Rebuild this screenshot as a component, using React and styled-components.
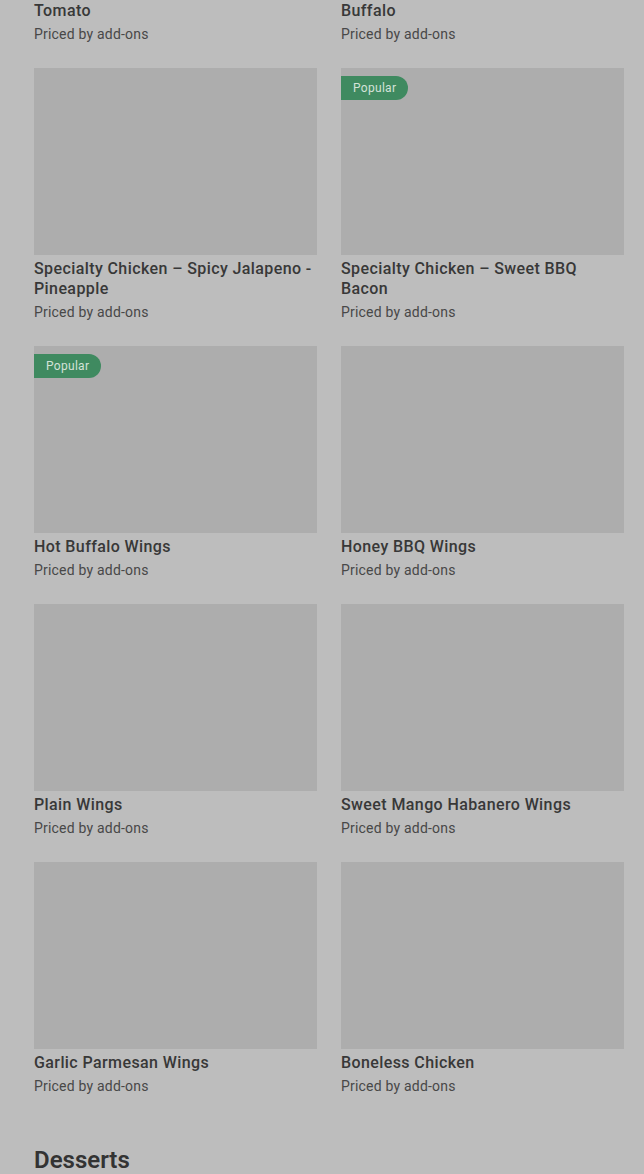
import styled, { createGlobalStyle } from "styled-components"

const GlobalStyle = createGlobalStyle`
    html, body {
        margin: 0;
        padding: 0;
        background: #bdbdbd;
        overflow: hidden;
    }
    body {
        font-family: Roboto, "Noto Sans", sans-serif;
        color: #333333;
    }
`

const items = [
    { name: "Specialty Chicken – Pepperoni Tomato", popular: false },
    { name: "Specialty Chicken – Mild Classic Buffalo", popular: false },
    { name: "Specialty Chicken – Spicy Jalapeno - Pineapple", popular: false },
    { name: "Specialty Chicken – Sweet BBQ Bacon", popular: true },
    { name: "Hot Buffalo Wings", popular: true },
    { name: "Honey BBQ Wings", popular: false },
    { name: "Plain Wings", popular: false },
    { name: "Sweet Mango Habanero Wings", popular: false },
    { name: "Garlic Parmesan Wings", popular: false },
    { name: "Boneless Chicken", popular: false },
]

function App() {
    return (
        <Page>
            <GlobalStyle />
            <Grid>
                {items.map((item, i) => (
                    <Card key={i}>
                        <Photo>
                            {item.popular ? <Badge>Popular</Badge> : null}
                        </Photo>
                        <Title>{item.name}</Title>
                        <Price>Priced by add-ons</Price>
                    </Card>
                ))}
            </Grid>
            <SectionTitle>Desserts</SectionTitle>
        </Page>
    )
}

// page is scrolled: first row of cards starts above the viewport
const Page = styled.div`
    padding: 0 20px 0 34px;
    margin-top: -210px;
    height: 1384px;
`

const Grid = styled.div`
    display: grid;
    grid-template-columns: 1fr 1fr;
    column-gap: 24px;
    row-gap: 24px;
`

const Card = styled.div`
    display: flex;
    flex-direction: column;
`

const Photo = styled.div`
    position: relative;
    height: 187px;
    background: #adadad;
    margin-bottom: 4px;
`

const Badge = styled.span`
    position: absolute;
    top: 8px;
    left: 0;
    height: 24px;
    padding: 0 12px;
    display: flex;
    align-items: center;
    background: #3f8a60;
    color: #d3e2d8;
    font-size: 12px;
    letter-spacing: 0.3px;
    border-radius: 0 12px 12px 0;
`

const Title = styled.div`
    font-size: 16px;
    line-height: 20px;
    font-weight: 500;
    letter-spacing: 0.4px;
    color: #383838;
`

const Price = styled.div`
    margin-top: 3px;
    font-size: 14px;
    line-height: 20px;
    letter-spacing: 0.2px;
    color: #484848;
`

const SectionTitle = styled.h2`
    margin: 48px 0 0;
    font-size: 24px;
    line-height: 32px;
    font-weight: 600;
    color: #333333;
`

export default App
